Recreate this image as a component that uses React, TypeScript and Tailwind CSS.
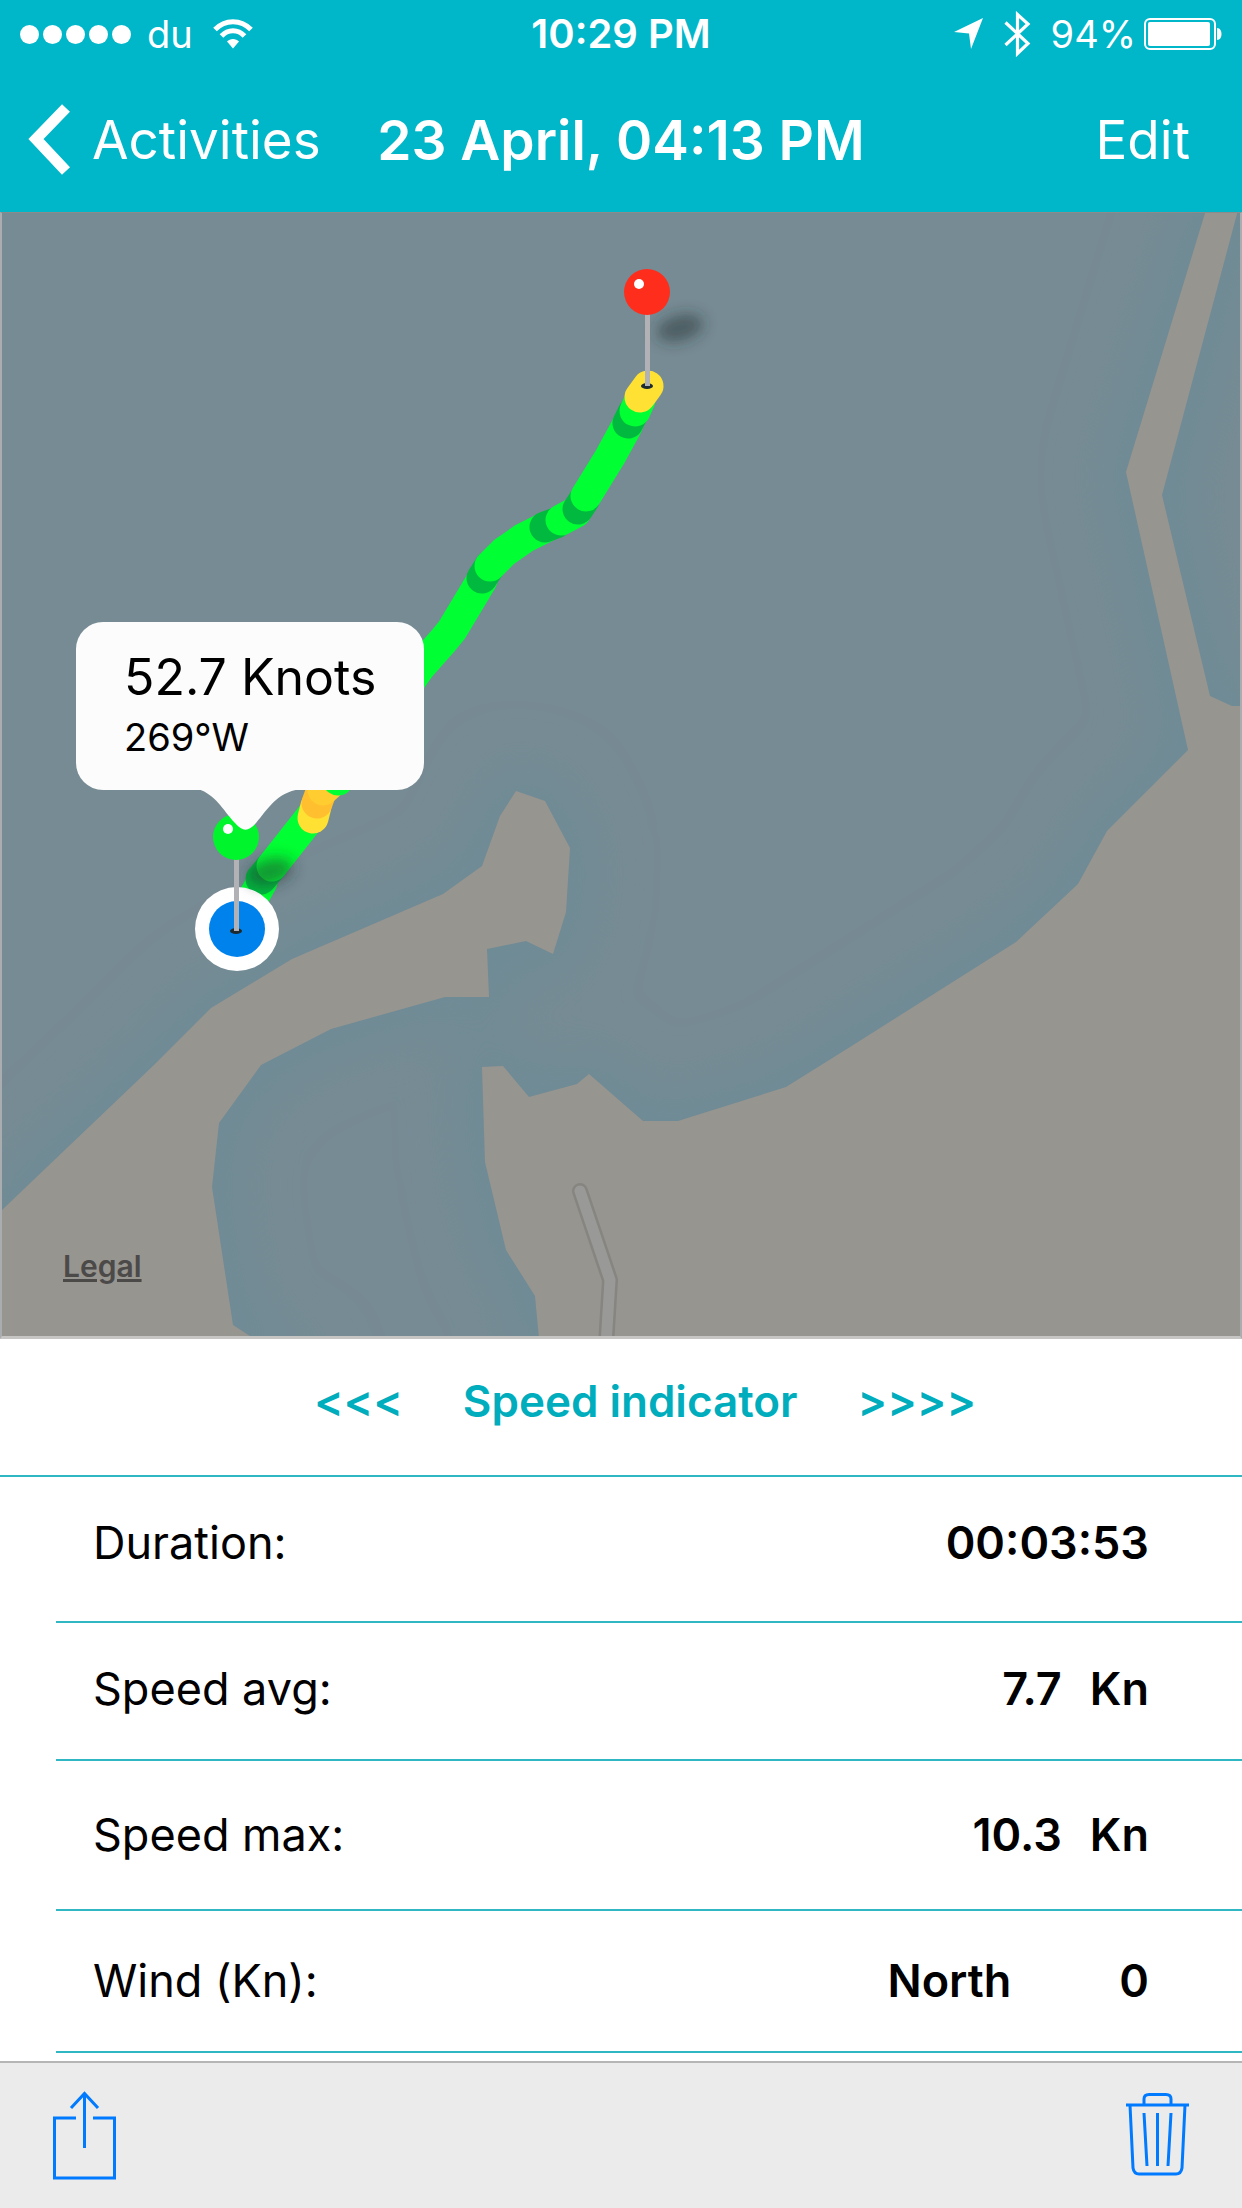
import React from 'react';

const stats = [
  { label: 'Duration:', values: ['00:03:53'], pad: 'pt-9 pb-12' },
  { label: 'Speed avg:', values: ['7.7', 'Kn'], pad: 'pt-9 pb-10' },
  { label: 'Speed max:', values: ['10.3', 'Kn'], pad: 'pt-11 pb-11' },
  { label: 'Wind (Kn):', values: ['North', '0'], pad: 'pt-10 pb-10', wide: true },
];

const GREEN = '#00ff33';
const DARK_GREEN = '#00b93e';
const YELLOW = '#ffe133';
const ORANGE = '#ffbf2e';

// track segments, coloured by speed, from the start to the finish
const track = [
  { color: GREEN, points: '244,914 262,882' },
  { color: DARK_GREEN, points: '261,879 272,866' },
  { color: GREEN, points: '272,866 313,814' },
  { color: YELLOW, points: '313,818 316,806' },
  { color: ORANGE, points: '317,803 321,792' },
  { color: '#ffcd30', points: '323,790 332,782' },
  { color: GREEN, points: '338,780 392,706 420,667 443,641 452,630 482,580' },
  { color: DARK_GREEN, points: '482,578 490,566' },
  { color: GREEN, points: '490,566 504,552 524,538 546,527' },
  { color: DARK_GREEN, points: '545,527 556,523' },
  { color: GREEN, points: '561,520 576,512' },
  { color: DARK_GREEN, points: '578,509 584,500' },
  { color: GREEN, points: '586,496 610,457 628,424' },
  { color: DARK_GREEN, points: '628,423 633,413' },
  { color: GREEN, points: '635,411 640,400' },
  { color: YELLOW, points: '640,397 648,386' },
];

const WEST_LAND =
  'M0 1212 L155 1064 L211 1008 L292 959 L443 894 L482 866 L500 816 L516 791 L545 801 L570 848 L566 912 L553 954 L526 941 L487 949 L489 997 L445 997 L331 1029 L261 1065 L219 1123 L212 1187 L233 1325 L253 1338 L0 1338 Z';
const EAST_LAND =
  'M539 1338 L535 1296 L506 1250 L485 1162 L482 1067 L503 1066 L529 1097 L577 1084 L589 1074 L643 1121 L678 1121 L786 1087 L850 1047 L1016 942 L1078 884 L1107 831 L1188 750 L1126 472 L1206 210 L1238 210 L1162 495 L1210 696 L1232 706 L1244 706 L1244 1338 Z';

const Pin = ({ x, y, color }: { x: number; y: number; color: string }) => (
  <g>
    <ellipse cx={x} cy={y} rx="6" ry="3" fill="#1d2a30" />
    <rect x={x - 2} y={y - 72} width="5" height="72" fill="#b2b1b6" />
    <circle cx={x} cy={y - 94} r="23" fill={color} />
    <circle cx={x - 8} cy={y - 102} r="5" fill="#fff" />
  </g>
);

const StatusBar = () => (
  <div className="grid h-[68px] grid-cols-[1fr_auto_1fr] items-center px-5 text-[38px] leading-[48px]">
    <div className="flex items-center">
      <div className="flex gap-1">
        {[0, 1, 2, 3, 4].map((dot) => (
          <span key={dot} className="h-[19px] w-[19px] rounded-full bg-white" />
        ))}
      </div>
      <span className="ml-4">du</span>
      <svg className="ml-5 h-[30px] w-[40px]" viewBox="0 0 40 30" fill="none" stroke="#fff">
        <path d="M2 10.500 C12 0 28 0 38 10.500" strokeWidth="5" />
        <path d="M8.500 17 C15 10 25 10 31.500 17" strokeWidth="5" />
        <path d="M20 29.500 L14 22.500 C17 19 23 19 26 22.500 Z" fill="#fff" stroke="none" />
      </svg>
    </div>
    <span className="text-[40px] font-semibold">10:29 PM</span>
    <div className="flex items-center justify-end">
      <svg className="h-[32px] w-[30px]" viewBox="0 0 30 32" fill="#fff">
        <path d="M0 14 L29 0 L17 31 L15 15.500 Z" />
      </svg>
      <svg className="ml-5 h-[46px] w-[27px]" viewBox="0 0 27 46" fill="none" stroke="#fff" strokeWidth="3.200">
        <path d="M1.500 11.500 L24 32.500 L13.500 42.500 V3.500 L24 13 L1.500 34" />
      </svg>
      <span className="ml-5">94%</span>
      <svg className="ml-2 h-[32px] w-[78px]" viewBox="0 0 78 32">
        <rect x="1" y="1" width="70" height="30" rx="5" fill="none" stroke="#fff" strokeWidth="2" />
        <rect x="4" y="4" width="62" height="24" rx="2" fill="#fff" />
        <path d="M73 10 C79 10 79 22 73 22 Z" fill="#fff" />
      </svg>
    </div>
  </div>
);

const NavBar = () => (
  <nav className="grid h-[144px] grid-cols-[1fr_auto_1fr] items-center px-7 text-[53px] leading-[64px]">
    <button className="flex items-center gap-5">
      <svg className="h-[72px] w-[44px]" viewBox="0 0 44 72" fill="none" stroke="#fff" strokeWidth="11">
        <path d="M38 4 L8 35 L38 67" />
      </svg>
      <span>Activities</span>
    </button>
    <h1 className="text-[55px] font-semibold">23 April, 04:13 PM</h1>
    <button className="justify-self-end pr-6">Edit</button>
  </nav>
);

const TrackMap = () => (
  <section className="relative border-x-2 border-t border-b-3 border-x-[#a9adb0] border-t-[#8b8b8b] border-b-[#c6c5c4]">
    <svg
      className="block h-[1123px] w-full"
      viewBox="2 213 1238 1123"
      preserveAspectRatio="xMinYMid slice"
      role="img"
      aria-label="Track"
    >
      <defs>
        <filter id="shore" x="-20%" y="-20%" width="140%" height="140%">
          <feGaussianBlur stdDeviation="28" />
        </filter>
        <filter id="pinShadow" x="-60%" y="-100%" width="220%" height="300%">
          <feGaussianBlur stdDeviation="7" />
        </filter>
      </defs>
      <rect x="0" y="200" width="1244" height="1140" fill="#778b94" />
      <g fill="#6e8b95" stroke="#6e8b95" strokeWidth="50" filter="url(#shore)">
        <path d={WEST_LAND} />
        <path d={EAST_LAND} />
      </g>
      <g fill="#979590">
        <path d={WEST_LAND} />
        <path d={EAST_LAND} />
      </g>
      <g fill="none" strokeLinecap="round" strokeLinejoin="round">
        <path d="M580 1191 L610 1280 L606 1345" stroke="#868580" strokeWidth="16" />
        <path d="M580 1191 L610 1280 L606 1345" stroke="#999998" strokeWidth="11" />
        {track.map((segment) => (
          <polyline key={segment.points} points={segment.points} stroke={segment.color} strokeWidth="31" />
        ))}
      </g>
      <circle cx="237" cy="929" r="42" fill="#fff" />
      <circle cx="237" cy="929" r="28" fill="#0082ec" />
      <g fill="#20302f" fillOpacity="0.5" filter="url(#pinShadow)">
        <ellipse cx="680" cy="328" rx="24" ry="13" transform="rotate(-15 680 328)" />
        <ellipse cx="270" cy="872" rx="24" ry="13" transform="rotate(-15 270 872)" />
      </g>
      <Pin x={236} y={931} color="#00f52c" />
      <Pin x={647} y={386} color="#ff2d1c" />
    </svg>

    <div className="absolute left-[74px] top-[409px] h-[168px] w-[348px] whitespace-nowrap rounded-[27px] bg-[#fbfcfb] px-12 pt-[23px] text-black">
      <p className="text-[50px] leading-[64px]">52.7 Knots</p>
      <p className="text-[38px] leading-[56px]">269°W</p>
      <svg className="absolute left-[122px] top-[167px] h-[43px] w-[102px]" viewBox="0 0 102 43" fill="#fbfcfb">
        <path d="M0 0 C18 6 24 20 37 34 C45 43 50 43 58 34 C70 20 78 4 102 0 Z" />
      </svg>
    </div>

    <a
      href="#legal"
      className="absolute bottom-[50px] left-[61px] text-[30px] font-semibold leading-[40px] text-[#4b4a48] underline decoration-3 underline-offset-2"
    >
      Legal
    </a>
  </section>
);

const SpeedIndicator = () => (
  <div className="flex justify-center gap-[60px] border-b-2 border-[#2fb7c4] pt-8 pb-11 pl-12 text-[44px] font-semibold leading-[60px] text-[#00adbd]">
    <button>&lt;&lt;&lt;</button>
    <span>Speed indicator</span>
    <button>&gt;&gt;&gt;&gt;</button>
  </div>
);

const StatsTable = () => (
  <div className="pl-14">
    <table className="w-full leading-[60px]">
      <tbody>
        {stats.map((row) => (
          <tr key={row.label} className="border-b-2 border-[#2fb7c4]">
            <th scope="row" className={`pl-[37px] text-left font-normal ${row.pad}`}>
              {row.label}
            </th>
            <td className={`pr-[93px] font-semibold ${row.pad}`}>
              <div className={row.wide ? 'flex justify-end gap-[108px]' : 'flex justify-end gap-7'}>
                {row.values.map((value) => (
                  <span key={value}>{value}</span>
                ))}
              </div>
            </td>
          </tr>
        ))}
      </tbody>
    </table>
  </div>
);

const Toolbar = () => (
  <footer className="mt-auto flex h-[147px] items-center justify-between border-t-2 border-[#b5b5b5] bg-[#ebebeb] px-[52px]">
    <button aria-label="Share">
      <svg className="h-[90px] w-[65px]" viewBox="0 0 65 90" fill="none" stroke="#007aff" strokeWidth="3">
        <path d="M24 27 H2.500 V87 H62.500 V27 H41" />
        <path d="M32.500 2.500 V57 M19 17 L32.500 2.500 L46 17" />
      </svg>
    </button>
    <button aria-label="Delete">
      <svg className="h-[86px] w-[65px]" viewBox="0 0 65 86" fill="none" stroke="#007aff" strokeWidth="3">
        <path d="M1 12 H64" />
        <path d="M19 12 V6 Q19 1.500 24 1.500 H41 Q46 1.500 46 6 V12" />
        <path d="M5 12 L8 75 Q9 81 14 81 H51 Q56 81 57 75 L60 12" />
        <path d="M19 20 L22 73 M32.500 20 V73 M46 20 L43 73" />
      </svg>
    </button>
  </footer>
);

export default function App() {
  return (
    <div className="flex min-h-screen flex-col bg-white font-['Inter',sans-serif] text-[45px] text-black">
      <header className="bg-[#00b6c9] text-white">
        <StatusBar />
        <NavBar />
      </header>
      <TrackMap />
      <SpeedIndicator />
      <StatsTable />
      <Toolbar />
    </div>
  );
}
